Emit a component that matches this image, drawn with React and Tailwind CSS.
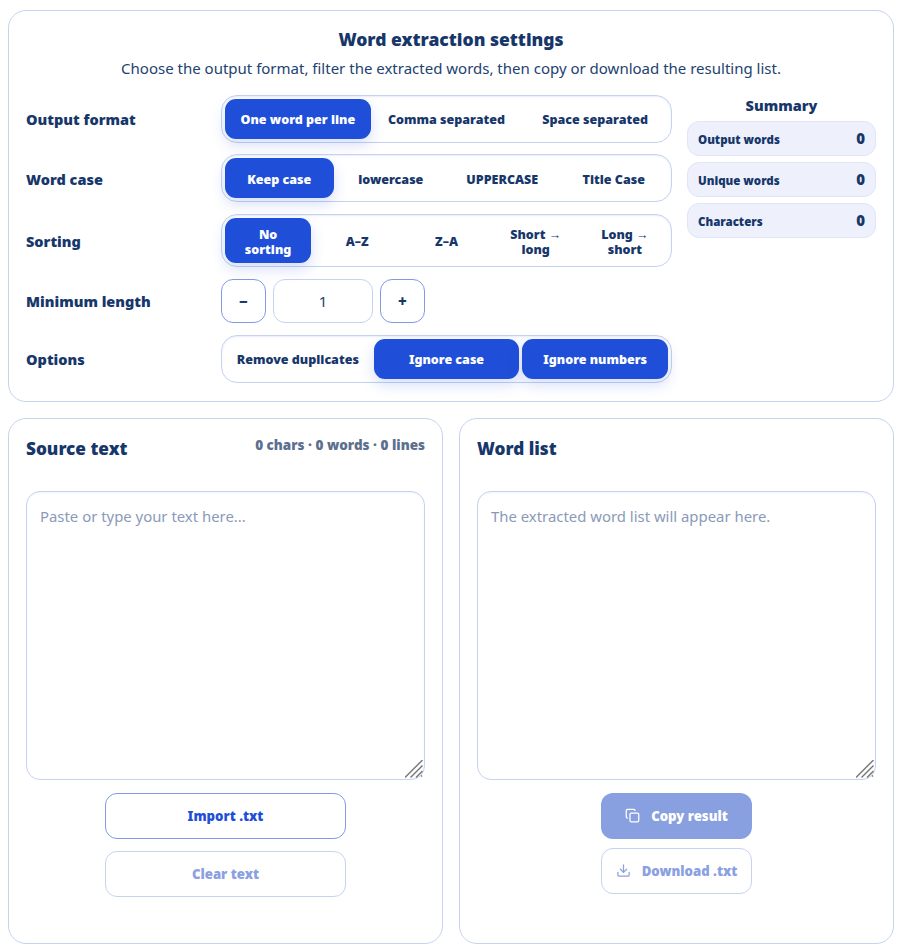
import React from "react";
import { Copy, Download } from "lucide-react";

function Seg({ items, cols, active, tall }) {
  return (
    <div className={`grid ${cols} gap-[3px] rounded-[16px] border border-[#c5d3f0] bg-white p-[3px] shadow-[inset_0_1px_2px_rgba(31,79,216,0.1)]`}>
      {items.map((t, i) => (
        <button
          key={t}
          className={`flex items-center justify-center rounded-[11px] pt-[2px] text-center text-[12.5px] leading-[15px] font-black ${tall ? "h-[45px] px-[12px]" : "h-[40px] px-[8px]"} ${active.includes(i) ? "bg-[#1f4fd8] text-white shadow-[0_6px_14px_rgba(31,79,216,0.18)]" : "text-[#17376b]"}`}
        >
          {t}
        </button>
      ))}
    </div>
  );
}

function Label({ children }) {
  return <div className="pt-[2px] text-[14.5px] font-black text-[#17376b]">{children}</div>;
}

function Stat({ label, value }) {
  return (
    <div className="flex h-[35px] items-center justify-between rounded-[12px] border border-[#dfe6f8] bg-[#eef1fb] px-[10px]">
      <span className="pt-[3px] text-[11.5px] font-black text-[#17376b]">{label}</span>
      <span className="text-[15px] font-black text-[#17376b]">{value}</span>
    </div>
  );
}

function Handle() {
  return (
    <svg className="pointer-events-none absolute right-[2px] bottom-[2px] h-[18px] w-[18px]" viewBox="0 0 18 18" fill="none" stroke="#777777" strokeWidth="1.4">
      <path d="M0 17.5 L17.5 0" />
      <path d="M5.5 17.5 L17.5 5.5" />
      <path d="M11 17.5 L17.5 11" />
      <path d="M16 16.5 L17 15.5" />
    </svg>
  );
}

function Area({ placeholder }) {
  return (
    <div className="relative h-[289px]">
      <textarea readOnly placeholder={placeholder} className="block h-full w-full resize-none rounded-[14px] border border-[#c5d3f0] px-[13px] py-[13px] text-[14.9px] leading-[22px] shadow-[inset_0_1px_2px_rgba(31,79,216,0.06)] placeholder:text-[#8a9ab8]" />
      <Handle />
    </div>
  );
}

export default function App() {
  return (
    <div className="flex flex-col gap-[16px] bg-white pt-[10px] pr-[6px] pb-[7px] pl-[8px] font-['Noto_Sans',sans-serif] text-[#17376b]">
      <section className="h-[392px] rounded-[18px] border border-[#c5d3f0] bg-white px-[17px] pt-[16px]">
        <h1 className="text-center text-[17.5px] leading-[25px] font-black">Word extraction settings</h1>
        <p className="mt-[5px] text-center text-[15px] leading-[22px] text-[#22426f]">
          Choose the output format, filter the extracted words, then copy or download the resulting list.
        </p>
        <div className="mt-[15.7px] flex gap-[15px]">
          <div className="grid w-[646px] shrink-0 grid-cols-[195px_451px] items-center gap-y-[11.7px]">
            <Label>Output format</Label>
            <Seg cols="grid-cols-3" active={[0]} items={["One word per line", "Comma separated", "Space separated"]} />
            <Label>Word case</Label>
            <Seg cols="grid-cols-4" active={[0]} items={["Keep case", "lowercase", "UPPERCASE", "Title Case"]} />
            <Label>Sorting</Label>
            <Seg cols="grid-cols-5" tall active={[0]} items={["No sorting", "A–Z", "Z–A", "Short → long", "Long → short"]} />
            <Label>Minimum length</Label>
            <div className="flex gap-[7px]">
              <button className="flex h-[44.5px] w-[45px] items-center justify-center rounded-[12px] border border-[#7f9be6] text-[15px] font-black">−</button>
              <input readOnly value="1" className="h-[44.5px] w-[100px] rounded-[12px] border border-[#c5d3f0] text-center text-[15px] text-[#22426f]" />
              <button className="flex h-[44.5px] w-[45px] items-center justify-center rounded-[12px] border border-[#7f9be6] text-[15px] font-black">+</button>
            </div>
            <Label>Options</Label>
            <Seg cols="grid-cols-3" active={[1, 2]} items={["Remove duplicates", "Ignore case", "Ignore numbers"]} />
          </div>
          <aside className="flex w-[189px] flex-col gap-[6px]">
            <div className="text-center text-[14.5px] leading-[20px] font-black">Summary</div>
            <Stat label="Output words" value="0" />
            <Stat label="Unique words" value="0" />
            <Stat label="Characters" value="0" />
          </aside>
        </div>
      </section>
      <div className="grid grid-cols-2 gap-[16px]">
        <section className="h-[526px] rounded-[18px] border border-[#c5d3f0] bg-white px-[17px] pt-[16px]">
          <div className="flex h-[56px] items-start justify-between">
            <h2 className="pt-[1px] text-[17.2px] leading-[26px] font-black">Source text</h2>
            <span className="text-[13.5px] leading-[20px] font-black text-[#5c6f8f]">0 chars · 0 words · 0 lines</span>
          </div>
          <Area placeholder="Paste or type your text here..." />
          <div className="mt-[13px] flex flex-col items-center gap-[12px]">
            <button className="h-[46px] w-[241px] rounded-[12px] border border-[#7f9be6] pt-[2px] text-[13.2px] font-black text-[#1f4fd8]">Import .txt</button>
            <button className="h-[46px] w-[241px] rounded-[12px] border border-[#c5d3f0] pt-[2px] text-[13.2px] font-black text-[#8aa0e0]">Clear text</button>
          </div>
        </section>
        <section className="h-[526px] rounded-[18px] border border-[#c5d3f0] bg-white px-[17px] pt-[16px]">
          <div className="h-[56px]">
            <h2 className="pt-[1px] text-[17.2px] leading-[26px] font-black">Word list</h2>
          </div>
          <Area placeholder="The extracted word list will appear here." />
          <div className="mt-[13px] flex flex-col items-center gap-[9px]">
            <button className="flex h-[46px] w-[151px] items-center justify-center gap-[11px] rounded-[12px] bg-[#88a0e0] text-[13.2px] font-black text-white"><Copy size={15} className="-mt-[1px]" /><span className="pt-[1px]">Copy result</span></button>
            <button className="flex h-[46px] w-[151px] items-center justify-center gap-[11px] rounded-[12px] border border-[#c5d3f0] text-[13.2px] font-black text-[#8aa0e0]"><Download size={15} className="-mt-[1px]" /><span className="pt-[1px]">Download .txt</span></button>
          </div>
        </section>
      </div>
    </div>
  );
}
